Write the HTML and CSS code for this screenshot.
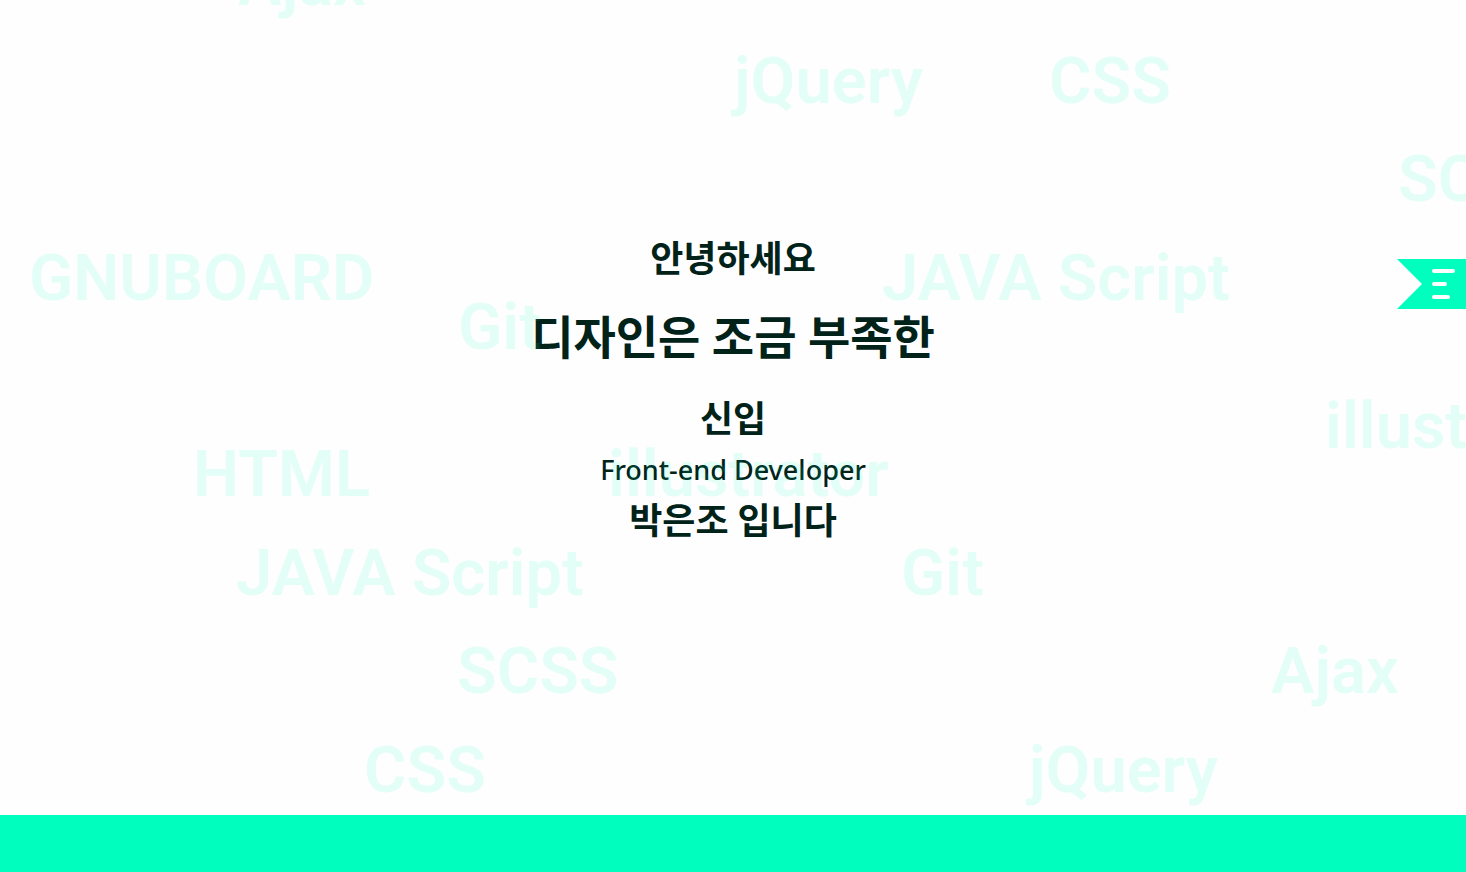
FILE: index.html
```html
<!DOCTYPE html>
<html lang="ko">
<head>
<meta charset="utf-8">
<title>박은조 포트폴리오</title>
<link rel="stylesheet" href="styles.css">
</head>
<body>
<main class="hero">
  <div class="intro">
    <p class="line">안녕하세요</p>
    <h1 class="headline">디자인은 조금 부족한</h1>
    <p class="line">신입</p>
    <p class="role">Front-end Developer</p>
    <p class="line">박은조 입니다</p>
  </div>
  <div class="words" aria-hidden="true">
    <span class="word w1">Ajax</span>
    <span class="word w2">jQuery</span>
    <span class="word w3">CSS</span>
    <span class="word w4">SCSS</span>
    <span class="word w5">GNUBOARD</span>
    <span class="word w6">JAVA Script</span>
    <span class="word w7">Git</span>
    <span class="word w8">illustrator</span>
    <span class="word w9">HTML</span>
    <span class="word w10">illustrator</span>
    <span class="word w11">JAVA Script</span>
    <span class="word w12">Git</span>
    <span class="word w13">SCSS</span>
    <span class="word w14">Ajax</span>
    <span class="word w15">CSS</span>
    <span class="word w16">jQuery</span>
  </div>
</main>
<button class="menu" type="button" aria-label="메뉴">
  <svg class="menu-icon" width="69" height="50" viewBox="0 0 69 50">
    <path d="M0 0H69V50H0L25 25Z" fill="#00ffbf"/>
    <path d="M37 12H56M37 25H48M37 38H51" stroke="#fff" stroke-width="4" stroke-linecap="round"/>
  </svg>
</button>
<footer class="band"></footer>
</body>
</html>
```

FILE: styles.css
```css
* { box-sizing: border-box; }
body {
  margin: 0;
  min-height: 100vh;
  display: flex;
  flex-direction: column;
  overflow: hidden;
  background: #fefefe;
  font-family: Roboto, "Noto Sans CJK KR", sans-serif;
}
.hero {
  position: relative;
  flex: 1;
  display: flex;
  justify-content: center;
  align-items: flex-start;
  overflow: hidden;
}
.words {
  position: absolute;
  inset: 0;
  opacity: 0.1;
  pointer-events: none;
}
.word {
  position: absolute;
  font-size: 65px;
  line-height: 72px;
  font-weight: 600;
  white-space: nowrap;
  color: #00ffbf;
}
.w1 { left: 238px; top: -53px; }
.w2 { left: 734px; top: 45px; }
.w3 { left: 1049px; top: 45px; }
.w4 { left: 1398px; top: 143px; }
.w5 { left: 29px; top: 242px; }
.w6 { left: 882px; top: 242px; }
.w7 { left: 458px; top: 291px; }
.w8 { left: 1325px; top: 390px; }
.w9 { left: 193px; top: 438px; }
.w10 { left: 608px; top: 438px; }
.w11 { left: 236px; top: 537px; }
.w12 { left: 901px; top: 537px; }
.w13 { left: 457px; top: 635px; }
.w14 { left: 1271px; top: 635px; }
.w15 { left: 364px; top: 734px; }
.w16 { left: 1029px; top: 734px; }
.intro {
  padding-top: 234px;
  text-align: center;
  color: #002219;
}
.line, .headline, .role { margin: 0; }
.line { font-size: 36px; line-height: 52px; font-weight: 700; }
.headline {
  padding-bottom: 4px;
  font-size: 46px;
  line-height: 104px;
  font-weight: 700;
}
.role {
  padding-bottom: 2px;
  font-family: "Noto Sans", sans-serif;
  font-size: 27px;
  line-height: 48px;
  font-weight: 500;
}
.menu {
  position: absolute;
  top: 259px;
  right: 0;
  padding: 0;
  border: 0;
  background: none;
  cursor: pointer;
}
.menu-icon { display: block; fill: none; }
.band { height: 57px; background: #00ffbf; }
```
